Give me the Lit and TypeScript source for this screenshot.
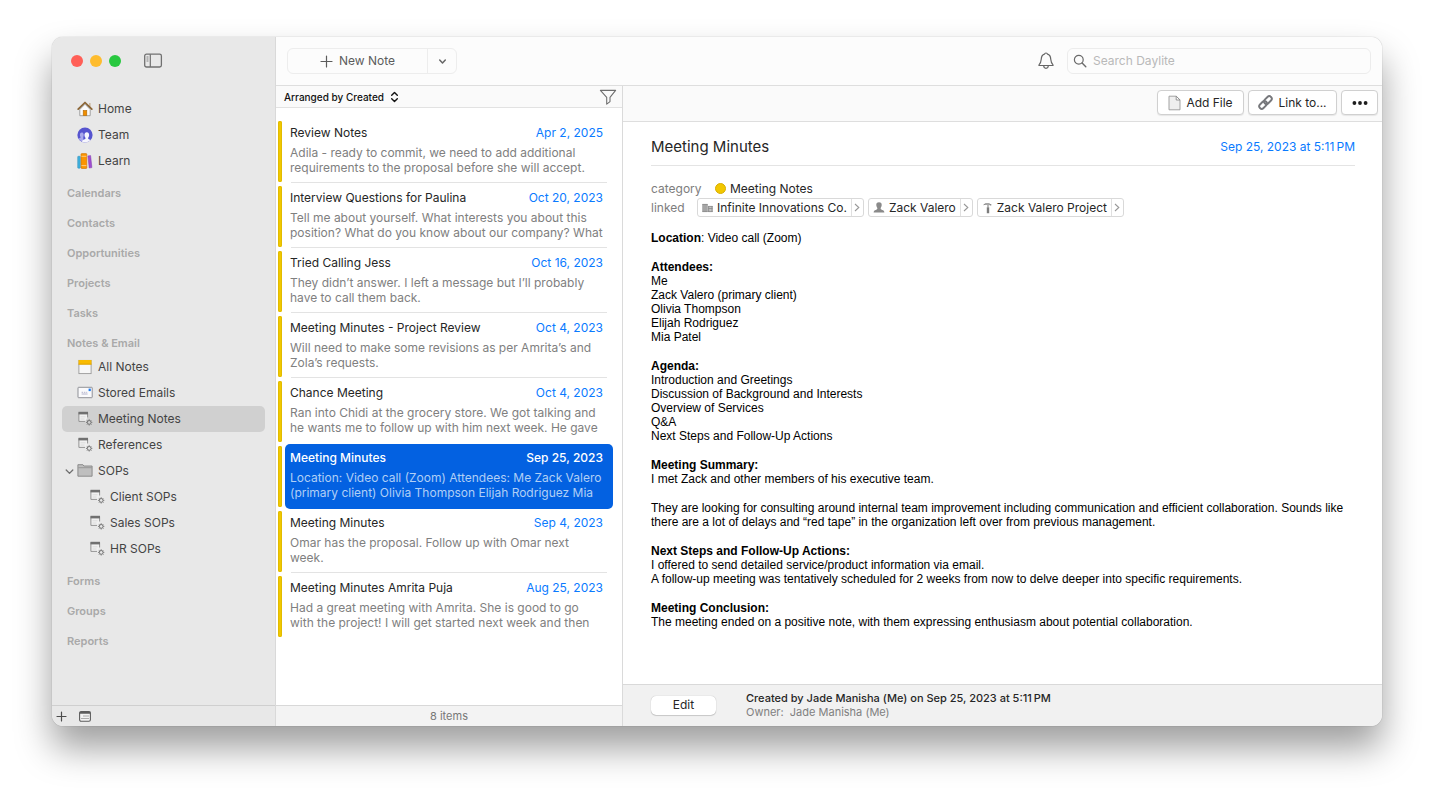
import { LitElement, html, svg, css, nothing, TemplateResult } from "lit";
import { customElement, state } from "lit/decorators.js";
import { classMap } from "lit/directives/class-map.js";

const icon = (w: number, h: number, body: unknown) =>
  html`<svg width=${w} height=${h} viewBox="0 0 ${w} ${h}" fill="none" aria-hidden="true">${body}</svg>`;

const homeIcon = icon(16, 16, svg`
  <path d="M2.800 8.500V14.700H13.200V8.500L8 3.200Z" fill="#fbfbfb" stroke="#8d8d8d" stroke-width=".8"/>
  <path d="M12 2h1.600v4l-1.600-1.600Z" fill="#c9b7a0"/>
  <path d="M1.200 8.200 8 1.500l6.800 6.700" stroke="#8a6434" stroke-width="1.700" stroke-linecap="round" stroke-linejoin="round"/>
  <rect x="6.200" y="9.500" width="3.600" height="5" fill="#ef8e00" stroke="#b36a05" stroke-width=".6"/>`);
const teamIcon = icon(16, 16, svg`
  <circle cx="8" cy="8" r="7.600" fill="#5654cf"/>
  <path d="M1.600 11.800c.8-.6 2.300-.7 2-1.700C2.500 8.400 2.700 5.500 4.800 5.500c2 0 2.400 2.500 1.500 4.400v4.900c-2-.3-3.700-1.400-4.700-3Z" fill="#a9a8ec"/>
  <path d="M5 14.800c.2-1.700 1.600-2 2.800-2.500 1-.5.900-1.200.3-2-1.300-2-.6-5 1.700-5s3 3 1.700 5c-.6.800-.7 1.500.3 2l1.800.8c-2.300 2.600-6 3-8.600 1.700Z" fill="#f6f6fd"/>`);
const learnIcon = icon(16, 16, svg`
  <rect x=".7" y="3.300" width="2.600" height="11.900" rx=".6" fill="#3fb0dd" stroke="#2f8fb8" stroke-width=".5"/>
  <rect x="4" y=".6" width="5.800" height="14.900" rx=".8" fill="#fb9400" stroke="#c87204" stroke-width=".6"/>
  <path d="M4.400 3.300h5M4.400 12.600h5" stroke="#ffd08a" stroke-width=".9"/>
  <path d="m10.900 2.900 2.700-.3 1.300 12-2.700.4Z" fill="#a04fd0" stroke="#7f38ad" stroke-width=".5"/>`);
const noteIcon = icon(16, 16, svg`
  <rect x="1.900" y="1.400" width="12.200" height="13.200" fill="#f7f7f7" stroke="#9a9a9a" stroke-width=".9"/>
  <rect x="1.500" y="1" width="13" height="4.500" fill="#f9bb00"/>
  <path d="M1.500 5.200h13" stroke="#d79b00" stroke-width=".8"/>`);
const mailIcon = icon(16, 16, svg`
  <rect x="1" y="2.300" width="14.200" height="10.400" rx=".6" fill="#fafafc" stroke="#85868c" stroke-width=".9"/>
  <rect x="11.600" y="3.600" width="2.200" height="2.500" fill="#1f7cf2"/>
  <path d="M4.600 7.300h1.500M6.900 7.300h1.500M9.200 7.300h1M4.600 9h6" stroke="#b4b4cc" stroke-width="1"/>`);
const smartIcon = icon(16, 16, svg`
  <path d="M8 10.400H1.900V1.500h8.700v5" fill="#f1f1f1" stroke="#888" stroke-width=".9"/>
  <rect x="1.500" y=".8" width="9.500" height="2.600" fill="#707070"/>
  <path d="M3.500 5.800h5M3.500 8h4" stroke="#d6d6d6" stroke-width=".8"/>
  <circle cx="12.200" cy="11.400" r="1.900" stroke="#6f6f6f" stroke-width="1"/>
  <path d="M12.200 9.300v-1M12.200 14.500v-1M10.100 11.400h-1M15.300 11.400h-1M10.600 9.800l-.600-.600M14.400 13.600l-.600-.600M10.600 13l-.600.600M14.400 9.200l-.600.600" stroke="#6f6f6f" stroke-width=".9"/>`);
const folderIcon = icon(16, 16, svg`
  <path d="M.9 13.200V1.700h5l1 1.300h8.200v10.200Z" fill="#bfbfbf" stroke="#858585" stroke-width=".9"/>
  <path d="M1.300 4.700h13.400" stroke="#8d8d8d" stroke-width=".8"/>`);
const chevronDown = icon(9, 9, svg`<path d="m1.200 3 3.300 3.400L7.800 3" stroke="#707070" stroke-width="1.300" stroke-linecap="round" stroke-linejoin="round"/>`);
const menuChevron = icon(9, 9, svg`<path d="M1.700 3 4.500 5.900 7.300 3" stroke="#666" stroke-width="1.500" stroke-linecap="round" stroke-linejoin="round"/>`);
const panelIcon = icon(20, 16, svg`
  <rect x="1.700" y="1.200" width="16.700" height="12.800" rx="1.800" stroke="#707070" stroke-width="1.300"/>
  <path d="M7.300 1.200V14" stroke="#707070" stroke-width="1.200"/>
  <path d="M3.500 4h2M3.500 6h2M3.500 8h2" stroke="#808080"/>`);
const plus = (s: number, color: string) =>
  icon(s, s, svg`<path d="M${s / 2} 1v${s - 2}M1 ${s / 2}h${s - 2}" stroke=${color} stroke-width="1.200" stroke-linecap="round"/>`);
const calendarIcon = icon(12, 11, svg`
  <rect x=".6" y=".6" width="10.800" height="9.600" rx="1.500" fill="#f2f2f2" stroke="#5c5c5c" stroke-width="1.100"/>
  <path d="M.6 1.700h10.800" stroke="#5c5c5c" stroke-width="2"/>
  <path d="M4.500 5h1M6.500 5h1M8.500 5h1M2.500 7.500h1M4.500 7.500h1M6.500 7.500h1M8.500 7.500h1" stroke="#666" stroke-width="1"/>`);
const sortIcon = icon(9, 12, svg`<path d="M1.700 4.200 4.500 1.400l2.800 2.800M1.700 7.800l2.800 2.800 2.800-2.800" stroke="#111" stroke-width="1.400" stroke-linecap="round" stroke-linejoin="round"/>`);
const funnelIcon = icon(18, 16, svg`<path d="M1.400 1.400h15.200l-5.600 6.900v4.300l-3.300 2.500V8.300Z" stroke="#6f6f6f" stroke-width="1.100" stroke-linejoin="round"/>`);
const bellIcon = icon(16, 18, svg`
  <path d="M1.200 13.500c-.3 0-.4-.4-.2-.6 1.500-1.600 2-2.500 2.200-5.400C3.400 4.300 4.800 2.600 6.500 2.200c.2-1.600 2.800-1.600 3 0 1.700.4 3.100 2.100 3.300 5.300.2 2.900.7 3.800 2.200 5.400.2.200.1.600-.2.600Z" stroke="#666" stroke-width="1.200" stroke-linejoin="round"/>
  <path d="M5.700 13.800c.1 3.300 4.500 3.300 4.600 0" stroke="#666" stroke-width="1.200"/>`);
const searchIcon = icon(14, 14, svg`<circle cx="5.800" cy="5.800" r="4.400" stroke="#6a6a6a" stroke-width="1.200"/><path d="m9.100 9.100 3.700 3.600" stroke="#6a6a6a" stroke-width="1.400" stroke-linecap="round"/>`);
const fileIcon = icon(13, 16, svg`
  <path d="M1 1.200h7.300L12 4.900v9.900H1Z" fill="#efefef" stroke="#999" stroke-width=".9" stroke-linejoin="round"/>
  <path d="M8.200 1.200V5H12Z" fill="#fff" stroke="#8b8b8b" stroke-width=".9" stroke-linejoin="round"/>`);
const linkIcon = icon(15, 15, svg`
  <g transform="rotate(-45 7.500 7.500)" stroke="#77787c" stroke-width="1.900" stroke-linecap="round">
    <rect x="-.300" y="5" width="8.800" height="5" rx="2.500"/><rect x="6.500" y="5" width="8.800" height="5" rx="2.500"/>
  </g>`);
const dotsIcon = icon(16, 4, svg`<circle cx="2.400" cy="2" r="1.900" fill="#1e1e1e"/><circle cx="8" cy="2" r="1.900" fill="#1e1e1e"/><circle cx="13.600" cy="2" r="1.900" fill="#1e1e1e"/>`);
const companyIcon = icon(11, 10, svg`
  <path d="M.5 1h5v8h-5ZM6.300 3h4.200v6H6.300Z" fill="#c4c4c4"/>
  <path d="M1 1v8M3 1v8M5 1v8M6.700 3v6M10.100 3v6" stroke="#808080" stroke-width=".9"/>
  <path d="M.5 1.400h5M.5 8.600h5M6.300 3.400h4.200M6.300 5.500h4.200M6.300 8.600h4.200" stroke="#8a8a8a" stroke-width=".8"/>`);
const personIcon = icon(12, 11, svg`<path d="M6 .3c2 0 2.900 1.300 2.700 3-.2 1.500-.8 2-1 2.700-.2 1 .3 1.500 1.500 1.900 1.300.4 2 .8 2.200 2.600H.6c.2-1.800.9-2.200 2.200-2.600C4 7.500 4.500 7 4.300 6c-.2-.7-.8-1.200-1-2.700-.200-1.700.7-3 2.700-3Z" fill="#8a8a8a"/>`);
const hammerIcon = icon(11, 12, svg`<path d="M1.200 3.200c.8-1.400 2-2 3.300-2h3.200v.7h1.600v1.500H7.700v-.6H4.600c-1.200-.2-2.200 0-3.400.4Z" fill="#8a8a8a"/><path d="M6 3v2.200" stroke="#8a8a8a" stroke-width="1.200"/><path d="M6 5.300v6" stroke="#7c7c7c" stroke-width="2.400"/>`);
const chevronRight = icon(6, 9, svg`<path d="m1 1 3.800 3.500L1 8" stroke="#999" stroke-width="1.100"/>`);

interface NavItem { label: string; icon: TemplateResult; child?: boolean; open?: boolean; }
interface NavSection { title?: string; items?: NavItem[]; }
interface Note { title: string; date: string; preview: string; }

const SECTIONS: NavSection[] = [
  { items: [
    { label: "Home", icon: homeIcon },
    { label: "Team", icon: teamIcon },
    { label: "Learn", icon: learnIcon },
  ] },
  { title: "Calendars" },
  { title: "Contacts" },
  { title: "Opportunities" },
  { title: "Projects" },
  { title: "Tasks" },
  { title: "Notes & Email", items: [
    { label: "All Notes", icon: noteIcon },
    { label: "Stored Emails", icon: mailIcon },
    { label: "Meeting Notes", icon: smartIcon },
    { label: "References", icon: smartIcon },
    { label: "SOPs", icon: folderIcon, open: true },
    { label: "Client SOPs", icon: smartIcon, child: true },
    { label: "Sales SOPs", icon: smartIcon, child: true },
    { label: "HR SOPs", icon: smartIcon, child: true },
  ] },
  { title: "Forms" },
  { title: "Groups" },
  { title: "Reports" },
];

const NOTES: Note[] = [
  { title: "Review Notes", date: "Apr 2, 2025", preview: "Adila - ready to commit, we need to add additional\nrequirements to the proposal before she will accept." },
  { title: "Interview Questions for Paulina", date: "Oct 20, 2023", preview: "Tell me about yourself. What interests you about this\nposition? What do you know about our company? What" },
  { title: "Tried Calling Jess", date: "Oct 16, 2023", preview: "They didn’t answer. I left a message but I’ll probably\nhave to call them back." },
  { title: "Meeting Minutes - Project Review", date: "Oct 4, 2023", preview: "Will need to make some revisions as per Amrita’s and\nZola’s requests." },
  { title: "Chance Meeting", date: "Oct 4, 2023", preview: "Ran into Chidi at the grocery store. We got talking and\nhe wants me to follow up with him next week. He gave" },
  { title: "Meeting Minutes", date: "Sep 25, 2023", preview: "Location: Video call (Zoom) Attendees: Me Zack Valero\n(primary client) Olivia Thompson Elijah Rodriguez Mia" },
  { title: "Meeting Minutes", date: "Sep 4, 2023", preview: "Omar has the proposal. Follow up with Omar next\nweek." },
  { title: "Meeting Minutes Amrita Puja", date: "Aug 25, 2023", preview: "Had a great meeting with Amrita. She is good to go\nwith the project! I will get started next week and then" },
];

const LINKS = [
  { label: "Infinite Innovations Co.", icon: companyIcon },
  { label: "Zack Valero", icon: personIcon },
  { label: "Zack Valero Project", icon: hammerIcon },
];

const BODY: { heading?: string; lines: string[] }[] = [
  { heading: "Attendees:", lines: ["Me", "Zack Valero (primary client)", "Olivia Thompson", "Elijah Rodriguez", "Mia Patel"] },
  { heading: "Agenda:", lines: ["Introduction and Greetings", "Discussion of Background and Interests", "Overview of Services", "Q&A", "Next Steps and Follow-Up Actions"] },
  { heading: "Meeting Summary:", lines: ["I met Zack and other members of his executive team."] },
  { lines: ["They are looking for consulting around internal team improvement including communication and efficient collaboration. Sounds like there are a lot of delays and “red tape” in the organization left over from previous management."] },
  { heading: "Next Steps and Follow-Up Actions:", lines: ["I offered to send detailed service/product information via email.", "A follow-up meeting was tentatively scheduled for 2 weeks from now to delve deeper into specific requirements."] },
  { heading: "Meeting Conclusion:", lines: ["The meeting ended on a positive note, with them expressing enthusiasm about potential collaboration."] },
];

@customElement("app-root")
export class AppRoot extends LitElement {
  @state() private activeNav = "Meeting Notes";
  @state() private activeNote = 5;

  static styles = css`
    * { box-sizing: border-box; }
    :host {
      display: flex;
      min-height: 100vh;
      padding: 37px 52px 70px;
      background: #fff;
      box-sizing: border-box;
      font: 12px/16px Inter, "Liberation Sans", sans-serif;
      color: #262626;
    }
    svg { display: block; flex: none; }
    button { font: inherit; color: inherit; background: none; border: 0; padding: 0; margin: 0; }
    a { color: inherit; text-decoration: none; }
    h1, h2, h3, p, ul { margin: 0; padding: 0; font: inherit; }
    ul { list-style: none; }

    .window {
      flex: 1;
      min-width: 0;
      display: grid;
      grid-template-columns: 224px minmax(0, 1fr);
      border-radius: 11px;
      overflow: hidden;
      background: #fff;
      box-shadow: 0 0 1px rgba(0, 0, 0, .45), 0 22px 36px rgba(0, 0, 0, .38);
    }

    .sidebar {
      display: flex;
      flex-direction: column;
      background: #e8e8e8;
      border-right: 1px solid #d9d9d9;
      color: #444;
    }
    .titlebar { display: flex; align-items: center; height: 48px; padding-left: 19px; }
    .lights { display: flex; gap: 7px; margin-right: 22px; }
    .light { width: 12px; height: 12px; border-radius: 50%; background: #ff5f57; }
    .light.min { background: #febc2e; }
    .light.max { background: #28c840; }
    .nav { flex: 1; padding: 11px 10px 0; }
    .group { height: 20px; margin-top: 10px; padding-left: 5px; font-size: 11px; line-height: 19px; font-weight: 600; color: #a9a9a9; }
    .link {
      display: grid;
      grid-template-columns: 15px 16px 1fr;
      align-items: center;
      height: 26px;
      border-radius: 5px;
    }
    .link.child { grid-template-columns: 27px 16px 1fr; }
    .link.active { background: #d0d0d0; }
    .link .twist { padding-left: 3px; }
    .link .name { padding-left: 5px; }
    .side-foot { display: flex; align-items: center; gap: 12px; height: 21px; padding-left: 4px; border-top: 1px solid #cfcfcf; }

    .main { display: grid; grid-template-rows: 49px minmax(0, 1fr); min-width: 0; }
    .toolbar {
      display: flex;
      align-items: center;
      padding: 0 11px;
      background: #fcfcfc;
      border-bottom: 1px solid #dedede;
    }
    .split { display: flex; height: 26px; border: 1px solid #ededed; border-radius: 6px; color: #5c5c5c; }
    .new { display: flex; align-items: center; justify-content: center; gap: 6px; width: 139px; }
    .more { display: flex; align-items: center; justify-content: center; width: 29px; border-left: 1px solid #ededed; }
    .bell { margin-left: auto; margin-right: 13px; }
    .search { display: flex; align-items: center; gap: 6px; width: 304px; height: 26px; padding-left: 5px; border: 1px solid #ececec; border-radius: 6px; }
    .search input { flex: 1; min-width: 0; border: 0; outline: 0; padding: 0; background: none; font: inherit; color: #262626; }
    .search input::placeholder { color: #b9b9b9; opacity: 1; }

    .panes { display: grid; grid-template-columns: 347px minmax(0, 1fr); }
    .list { display: flex; flex-direction: column; border-right: 1px solid #dadada; }
    .arrange { display: flex; align-items: center; justify-content: space-between; height: 22px; padding: 0 5px 0 8px; background: #fafafa; border-bottom: 1px solid #e2e2e2; color: #111; }
    .sort { display: flex; align-items: center; gap: 6px; font-size: 10px; font-weight: 500; }
    .notes { flex: 1; padding: 11px 9px 0 2px; }
    .row { display: grid; grid-template-columns: 4px 1fr; column-gap: 3px; height: 65px; align-items: center; }
    .bar { height: 61px; border-radius: 2px; background: #f0c800; box-shadow: inset 0 0 0 1px #e2bb00; }
    .card { display: flex; flex-direction: column; position: relative; height: 65px; padding: 6px 10px 0 5px; border-radius: 5px; text-align: left; }
    .card.ruled::after { content: ""; position: absolute; left: 6px; right: 6px; bottom: 1px; height: 1px; background: #e3e3e3; }
    .head { display: flex; align-self: stretch; justify-content: space-between; margin-bottom: 4px; }
    .date { color: #0a7aff; }
    .preview { display: block; line-height: 15px; color: #808080; white-space: pre; overflow: hidden; }
    .card.active { background: #0361e1; color: #fff; font-weight: 500; }
    .card.active .date { color: #fff; }
    .card.active .preview { color: #b0cff6; font-weight: 400; }
    .count { height: 21px; border-top: 1px solid #d8d8d8; background: #f3f3f3; text-align: center; line-height: 20px; font-size: 11px; color: #777; }

    .detail { display: flex; flex-direction: column; min-width: 0; }
    .actions { display: flex; justify-content: flex-end; align-items: center; gap: 4px; height: 36px; padding: 0 4px 2px 0; background: #fafafa; border-bottom: 1px solid #dedede; }
    .btn { display: flex; align-items: center; justify-content: center; gap: 5px; height: 25px; border: 1px solid #d0d0d0; border-radius: 4px; background: #fff; box-shadow: 0 1px 1px rgba(0, 0, 0, .08); }
    .btn.file { width: 87px; }
    .btn.to { width: 89px; }
    .btn.dots { width: 37px; }
    .content { flex: 1; padding: 0 27px 20px 28px; }
    .title { display: flex; align-items: center; justify-content: space-between; height: 44px; padding-top: 6px; border-bottom: 1px solid #e4e4e4; }
    .title h1 { font-size: 15px; line-height: 20px; }
    .meta { display: grid; grid-template-columns: 46px 1fr; padding-top: 13px; line-height: 19px; color: #7d7d7d; }
    .category { display: flex; align-items: center; gap: 4px; padding-left: 18px; color: #262626; }
    .dot { width: 11px; height: 11px; border-radius: 50%; background: #f2c700; border: 1px solid #d9ae00; }
    .chips { display: flex; gap: 4px; color: #262626; }
    .chip { display: flex; align-items: center; height: 19px; border: 1px solid #d9d9d9; border-radius: 3px; line-height: 17px; background: #fff; }
    .chip .label { display: flex; align-items: center; gap: 4px; padding: 0 4px; }
    .chip .go { display: flex; align-items: center; justify-content: center; width: 12px; height: 17px; border-left: 1px solid #e0e0e0; }
    .body { display: grid; row-gap: 15px; padding-top: 14px; font: 12px/14px "Liberation Sans", Arial, sans-serif; color: #000; }
    .body h3, .body b { font-weight: 700; }
    .foot { display: flex; align-items: center; gap: 30px; height: 42px; padding: 0 28px 1px; background: #f1f1f1; border-top: 1px solid #d9d9d9; font-size: 11px; line-height: 14px; }
    .edit { width: 65px; height: 19px; border-radius: 5px; background: #fff; box-shadow: 0 0 1px rgba(0, 0, 0, .3), 0 1px 1px rgba(0, 0, 0, .15); font-size: 12px; }
    .created { font-weight: 500; }
    .owner { color: #808080; white-space: pre; }
  `;

  private navItem(item: NavItem) {
    const active = item.label === this.activeNav;
    return html`<a
      href="#"
      class=${classMap({ link: true, child: !!item.child, active })}
      @click=${(e: Event) => { e.preventDefault(); this.activeNav = item.label; }}
      ><span class="twist">${item.open ? chevronDown : nothing}</span>${item.icon}<span class="name">${item.label}</span></a>`;
  }

  private noteRow(note: Note, i: number) {
    const active = i === this.activeNote;
    const ruled = !active && i + 1 !== this.activeNote && i < NOTES.length - 1;
    return html`<li class="row">
      <span class="bar"></span>
      <button class=${classMap({ card: true, active, ruled })} @click=${() => { this.activeNote = i; }}>
        <span class="head"><span>${note.title}</span><span class="date">${note.date}</span></span>
        <span class="preview">${note.preview}</span>
      </button>
    </li>`;
  }

  render() {
    return html`
      <div class="window">
        <aside class="sidebar">
          <div class="titlebar">
            <div class="lights"><span class="light"></span><span class="light min"></span><span class="light max"></span></div>
            <button aria-label="Toggle sidebar">${panelIcon}</button>
          </div>
          <nav class="nav">
            ${SECTIONS.map((s) => html`
              ${s.title ? html`<h2 class="group">${s.title}</h2>` : nothing}
              ${(s.items ?? []).map((item) => this.navItem(item))}`)}
          </nav>
          <div class="side-foot">
            <button aria-label="Add">${plus(11, "#4c4c4c")}</button>
            <button aria-label="Calendar">${calendarIcon}</button>
          </div>
        </aside>
        <div class="main">
          <header class="toolbar">
            <div class="split">
              <button class="new">${plus(13, "#5c5c5c")}<span>New Note</span></button>
              <button class="more" aria-label="More note types">${menuChevron}</button>
            </div>
            <button class="bell" aria-label="Notifications">${bellIcon}</button>
            <label class="search">${searchIcon}<input type="text" aria-label="Search Daylite" placeholder="Search Daylite" /></label>
          </header>
          <div class="panes">
            <section class="list">
              <div class="arrange">
                <button class="sort">Arranged by Created ${sortIcon}</button>
                <button aria-label="Filter">${funnelIcon}</button>
              </div>
              <ul class="notes">${NOTES.map((n, i) => this.noteRow(n, i))}</ul>
              <div class="count">8 items</div>
            </section>
            <article class="detail">
              <div class="actions">
                <button class="btn file">${fileIcon}<span>Add File</span></button>
                <button class="btn to">${linkIcon}<span>Link to...</span></button>
                <button class="btn dots" aria-label="More actions">${dotsIcon}</button>
              </div>
              <div class="content">
                <header class="title"><h1>Meeting Minutes</h1><span class="date">Sep 25, 2023 at 5:11\u202fPM</span></header>
                <div class="meta">
                  <span>category</span><span class="category"><span class="dot"></span>Meeting Notes</span>
                  <span>linked</span>
                  <div class="chips">
                    ${LINKS.map((l) => html`<a href="#" class="chip"><span class="label">${l.icon}${l.label}</span><span class="go">${chevronRight}</span></a>`)}
                  </div>
                </div>
                <div class="body">
                  <p><b>Location</b>: Video call (Zoom)</p>
                  ${BODY.map((b) => html`<div>
                    ${b.heading ? html`<h3>${b.heading}</h3>` : nothing}
                    ${b.lines.map((l) => html`<p>${l}</p>`)}
                  </div>`)}
                </div>
              </div>
              <footer class="foot">
                <button class="edit">Edit</button>
                <div>
                  <p class="created">Created by Jade Manisha (Me) on Sep 25, 2023 at 5:11\u202fPM</p>
                  <p class="owner">Owner:  Jade Manisha (Me)</p>
                </div>
              </footer>
            </article>
          </div>
        </div>
      </div>`;
  }
}
